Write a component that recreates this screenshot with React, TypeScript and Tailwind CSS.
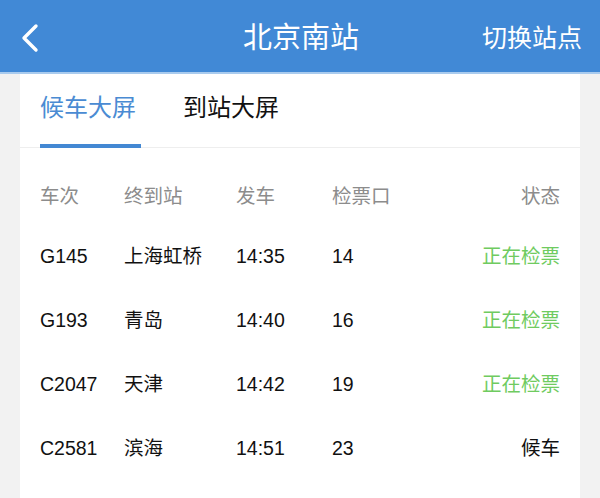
interface Train {
  no: string
  dest: string
  time: string
  gate: string
  status: string
  checking: boolean
}

const trains: Train[] = [
  { no: 'G145', dest: '上海虹桥', time: '14:35', gate: '14', status: '正在检票', checking: true },
  { no: 'G193', dest: '青岛', time: '14:40', gate: '16', status: '正在检票', checking: true },
  { no: 'C2047', dest: '天津', time: '14:42', gate: '19', status: '正在检票', checking: true },
  { no: 'C2581', dest: '滨海', time: '14:51', gate: '23', status: '候车', checking: false },
]

export default function App() {
  return (
    <div
      className="h-[498px] w-[600px] overflow-hidden bg-[#f2f2f2]"
      style={{ fontFamily: '"Liberation Sans", "Noto Sans CJK SC", sans-serif' }}
    >
      {/* Header */}
      <header className="grid h-[74px] grid-cols-[1fr_auto_1fr] items-center border-b-2 border-[#a9cbee] bg-[#4189d6] pt-[4px] pr-[18px] pl-[20px] text-white">
        <div className="flex items-center">
          <svg width="20" height="30" viewBox="0 0 20 30" fill="none">
            <polyline
              points="16,3 4,15 16,27"
              stroke="white"
              strokeWidth="3.4"
              strokeLinecap="round"
              strokeLinejoin="round"
            />
          </svg>
        </div>
        <h1 className="text-[29px] leading-none">北京南站</h1>
        <button className="text-right text-[25px] leading-none">切换站点</button>
      </header>

      <div className="mx-[20px] h-[424px] bg-white">
        {/* Tabs */}
        <div className="flex h-[74px] items-stretch border-b border-[#eeeeee] px-[20px]">
          <div className="relative flex w-[101px] items-center pb-[6px] text-[24px] text-[#4a8bd3]">
            候车大屏
            <span className="absolute bottom-[-1px] left-0 h-[4px] w-full bg-[#4388d3]" />
          </div>
          <div className="ml-[42px] flex items-center pb-[6px] text-[24px] text-[#111]">到站大屏</div>
        </div>

        {/* Table */}
        <div className="px-[20px] pt-[21px] text-[19.5px]">
          <div className="grid h-[56px] grid-cols-[84px_112px_96px_1fr_auto] items-center text-[#8c8c8c]">
            <span>车次</span>
            <span>终到站</span>
            <span>发车</span>
            <span>检票口</span>
            <span className="text-right">状态</span>
          </div>
          {trains.map((t) => (
            <div
              key={t.no}
              className="grid h-[64px] grid-cols-[84px_112px_96px_1fr_auto] items-center text-[#111]"
            >
              <span>{t.no}</span>
              <span>{t.dest}</span>
              <span>{t.time}</span>
              <span>{t.gate}</span>
              <span className={`text-right ${t.checking ? 'text-[#6fcb60]' : 'text-[#111]'}`}>{t.status}</span>
            </div>
          ))}
        </div>
      </div>
    </div>
  )
}
